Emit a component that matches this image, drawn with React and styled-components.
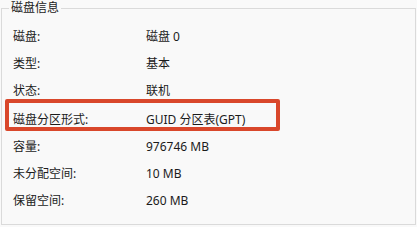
import React from 'react';
import styled, { createGlobalStyle } from 'styled-components';

const GlobalStyle = createGlobalStyle`
  html, body {
    margin: 0;
    padding: 0;
    background: #f9f9f9;
  }
  body {
    font-family: "Noto Sans", "Noto Sans CJK SC", sans-serif;
    font-size: 12px;
    color: #1b1b1b;
  }
`;

const Page = styled.div`
  width: 417px;
  height: 227px;
  padding: 8px 0 0 1px;
  box-sizing: border-box;
`;

const Group = styled.section`
  position: relative;
  width: 415px;
  height: 217px;
  box-sizing: border-box;
  border: 1px solid #dadada;
  padding: 14px 0 0 11px;
`;

const Legend = styled.div`
  position: absolute;
  top: -9px;
  left: 7px;
  padding: 0 2px;
  line-height: 16px;
  background: #f9f9f9;
`;

const Row = styled.div`
  position: relative;
  display: grid;
  grid-template-columns: 133px auto;
  height: 27px;
  line-height: 27px;
  margin-top: ${p => (p.$highlighted ? '2px' : '0')};

  &::after {
    content: '';
    display: ${p => (p.$highlighted ? 'block' : 'none')};
    position: absolute;
    top: -7px;
    left: -8px;
    width: 275px;
    height: 32px;
    box-sizing: border-box;
    border: 4px solid #d9472b;
    border-radius: 2px;
  }
`;

const Label = styled.span`
  white-space: nowrap;
`;

const Value = styled.span`
  white-space: nowrap;
`;

const rows = [
  ['磁盘:', '磁盘 0'],
  ['类型:', '基本'],
  ['状态:', '联机'],
  ['磁盘分区形式:', 'GUID 分区表(GPT)', true],
  ['容量:', '976746 MB'],
  ['未分配空间:', '10 MB'],
  ['保留空间:', '260 MB'],
];

export default function App() {
  return (
    <Page>
      <GlobalStyle />
      <Group>
        <Legend>磁盘信息</Legend>
        {rows.map(([label, value, hl]) => (
          <Row key={label} $highlighted={hl}>
            <Label>{label}</Label>
            <Value>{value}</Value>
          </Row>
        ))}
      </Group>
    </Page>
  );
}
